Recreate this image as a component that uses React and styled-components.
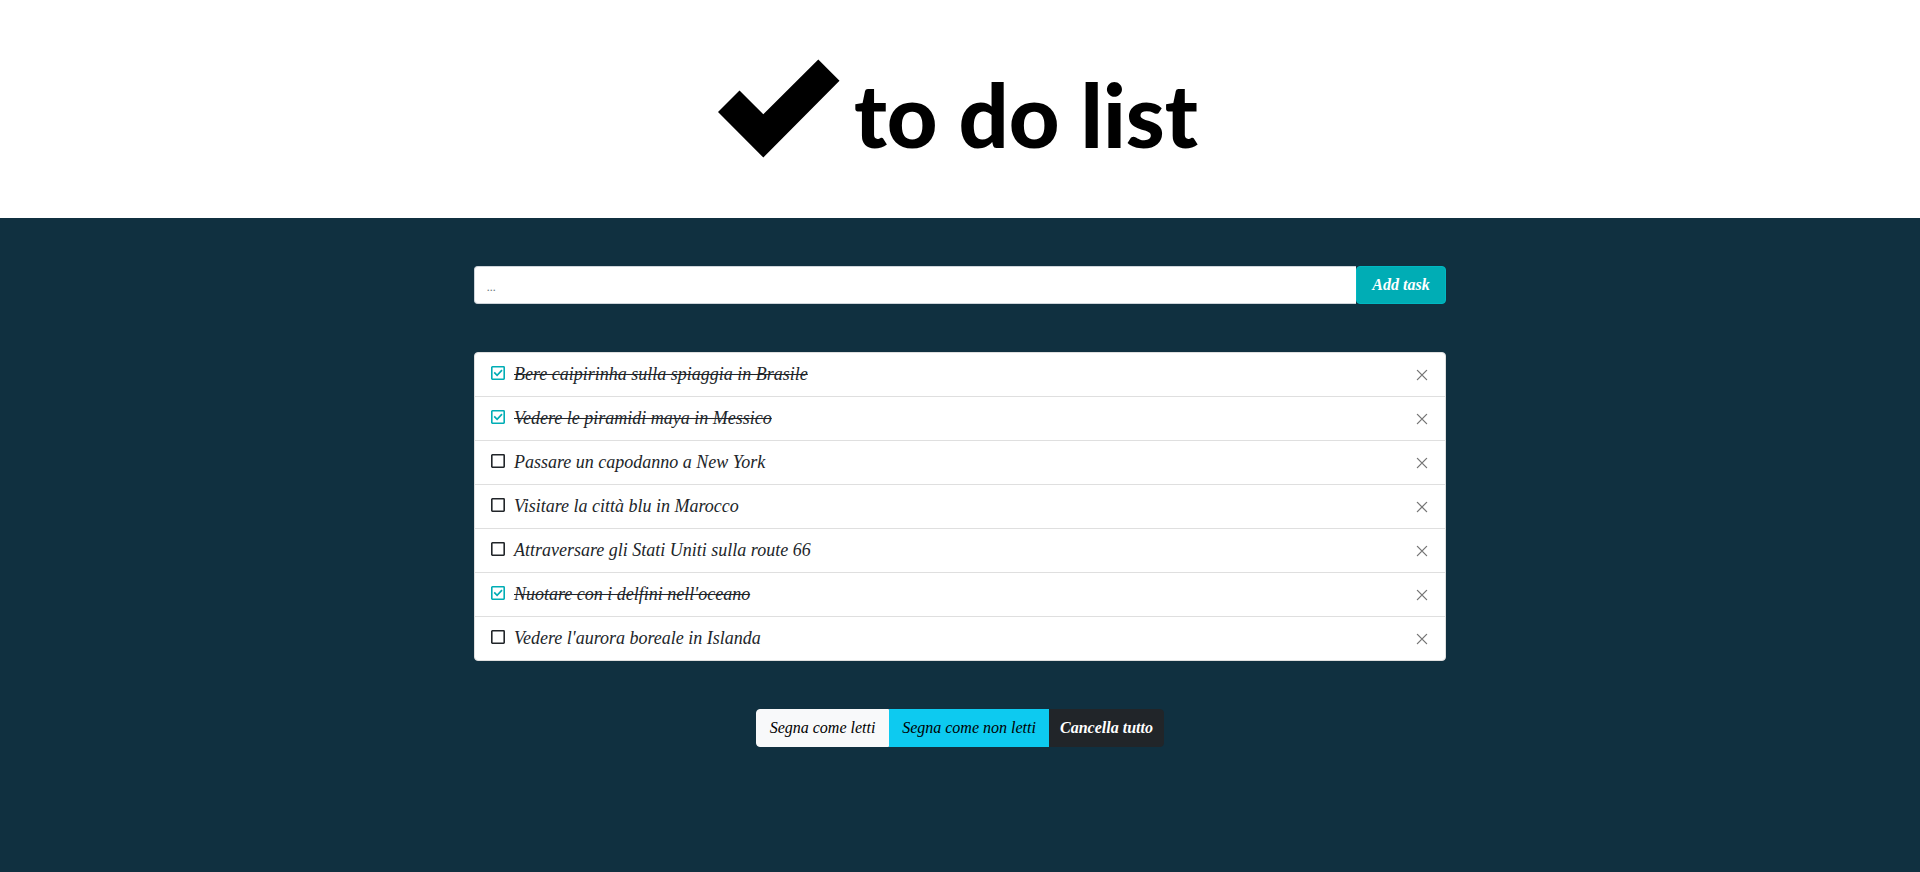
import React, { useState } from 'react';
import styled, { createGlobalStyle } from 'styled-components';

const GlobalStyle = createGlobalStyle`
  *, *::before, *::after { box-sizing: border-box; }
  body {
    margin: 0;
    background: #103040;
    color: #212529;
    font-family: "Liberation Serif", serif;
    font-style: italic;
    font-size: 18px;
    line-height: 24px;
  }
  button, input { font: inherit; }
`;

const Header = styled.header`
  display: flex;
  justify-content: center;
  align-items: flex-start;
  gap: 14px;
  height: 218px;
  padding: 59px 4px 0 0;
  background: #fff;
  color: #000;
`;

const CheckMark = styled.svg`
  width: 122px;
  height: 99px;
  flex: none;
`;

const Title = styled.h1`
  margin: 0;
  font: 900 88px/110px Lato, sans-serif;
  white-space: nowrap;
`;

const Main = styled.main`
  display: flex;
  flex-direction: column;
  gap: 48px;
  max-width: 996px;
  margin: 0 auto;
  padding: 48px 12px;
`;

const TaskForm = styled.form`
  display: flex;
`;

const TaskInput = styled.input`
  flex: 1;
  min-width: 0;
  height: 38px;
  padding: 6px 12px;
  border: 1px solid #ced4da;
  border-right: 0;
  border-radius: 4px 0 0 4px;
  background: #fff;
  color: #212529;
  outline: 0;
  &::placeholder { color: #6c757d; opacity: 1; font-size: 12px; }
`;

const tones = {
  teal: ['#00adb5', '#00b8c2', '#fff'],
  light: ['#f8f9fa', '#f8f9fa', '#000'],
  info: ['#0dcaf0', '#0dcaf0', '#000'],
  dark: ['#212529', '#212529', '#fff'],
};

const Button = styled.button`
  height: 38px;
  min-width: ${(p) => p.$width}px;
  padding: 0 10px;
  border: 1px solid ${(p) => tones[p.$tone][1]};
  background: ${(p) => tones[p.$tone][0]};
  color: ${(p) => tones[p.$tone][2]};
  font-size: 16px;
  font-weight: ${(p) => (p.$bold ? 700 : 400)};
  white-space: nowrap;
  cursor: pointer;
`;

const AddButton = styled(Button)`
  border-radius: 4px;
`;

const List = styled.ul`
  margin: 0;
  padding: 0;
  list-style: none;
  border: 1px solid #dfdfdf;
  border-radius: 4px;
  background: #fff;
  overflow: hidden;
`;

const Row = styled.li`
  display: flex;
  align-items: center;
  justify-content: space-between;
  min-height: 43px;
  padding: 0 13px 2px 16px;
  & + & {
    min-height: 44px;
    border-top: 1px solid #dfdfdf;
  }
`;

const TaskLabel = styled.label`
  display: flex;
  align-items: center;
  gap: 9px;
  cursor: pointer;
`;

const Tick = styled.span`
  display: grid;
  width: 14px;
  height: 14px;
  margin-bottom: 2px;
  & > * {
    grid-area: 1 / 1;
    width: 14px;
    height: 14px;
    margin: 0;
  }
  input { appearance: none; }
  svg {
    pointer-events: none;
    color: ${(p) => (p.$done ? '#00adb5' : '#212529')};
  }
`;

const TaskText = styled.span`
  text-decoration: ${(p) => (p.$done ? 'line-through' : 'none')};
`;

const RemoveButton = styled.button`
  display: grid;
  place-items: center;
  width: 20px;
  height: 24px;
  padding: 2px 0 0;
  border: 0;
  background: none;
  color: #777;
  cursor: pointer;
`;

const Actions = styled.div`
  display: flex;
  justify-content: center;
  ${Button}:first-child { border-radius: 4px 0 0 4px; }
  ${Button}:last-child { border-radius: 0 4px 4px 0; }
`;

const initialTasks = [
  { text: 'Bere caipirinha sulla spiaggia in Brasile', done: true },
  { text: 'Vedere le piramidi maya in Messico', done: true },
  { text: 'Passare un capodanno a New York', done: false },
  { text: 'Visitare la città blu in Marocco', done: false },
  { text: 'Attraversare gli Stati Uniti sulla route 66', done: false },
  { text: "Nuotare con i delfini nell'oceano", done: true },
  { text: "Vedere l'aurora boreale in Islanda", done: false },
];

function Task({ task, onToggle, onRemove }) {
  return (
    <Row>
      <TaskLabel>
        <Tick $done={task.done}>
          <input type="checkbox" checked={task.done} onChange={onToggle} />
          <svg viewBox="0 0 14 14" fill="none" stroke="currentColor" aria-hidden="true">
            <rect x="0.8" y="0.8" width="12.4" height="12.4" rx="0.6" strokeWidth="1.6" />
            {task.done && <path d="M3.2 6.4 6.1 9.3 11 4.2" strokeWidth="1.7" />}
          </svg>
        </Tick>
        <TaskText $done={task.done}>{task.text}</TaskText>
      </TaskLabel>
      <RemoveButton type="button" aria-label="Rimuovi" onClick={onRemove}>
        <svg width="12" height="12" viewBox="0 0 12 12" fill="none" stroke="currentColor" strokeWidth="1.3" strokeLinecap="round" aria-hidden="true">
          <path d="M1.4 1.4 10.6 10.6M10.6 1.4 1.4 10.6" />
        </svg>
      </RemoveButton>
    </Row>
  );
}

export default function App() {
  const [tasks, setTasks] = useState(initialTasks);
  const [draft, setDraft] = useState('');
  const markAll = (done) => setTasks(tasks.map((t) => ({ ...t, done })));
  const addTask = (e) => {
    e.preventDefault();
    if (draft.trim()) {
      setTasks([...tasks, { text: draft.trim(), done: false }]);
      setDraft('');
    }
  };

  return (
    <>
      <GlobalStyle />
      <Header>
        <CheckMark viewBox="0 0 122 99" aria-hidden="true">
          <path d="M0 53 21.5 31.5 45.3 55.3 100.3 0.5 121.5 21.8 45.3 98.5Z" />
        </CheckMark>
        <Title>to do list</Title>
      </Header>
      <Main>
        <TaskForm onSubmit={addTask}>
          <TaskInput
            aria-label="Task"
            placeholder="..."
            value={draft}
            onChange={(e) => setDraft(e.target.value)}
          />
          <AddButton type="submit" $tone="teal" $width={90} $bold>Add task</AddButton>
        </TaskForm>
        <List>
          {tasks.map((task, i) => (
            <Task
              key={task.text}
              task={task}
              onToggle={() => setTasks(tasks.map((t, j) => (j === i ? { ...t, done: !t.done } : t)))}
              onRemove={() => setTasks(tasks.filter((_, j) => j !== i))}
            />
          ))}
        </List>
        <Actions>
          <Button type="button" $tone="light" $width={133} onClick={() => markAll(true)}>Segna come letti</Button>
          <Button type="button" $tone="info" $width={160} onClick={() => markAll(false)}>Segna come non letti</Button>
          <Button type="button" $tone="dark" $width={115} $bold onClick={() => setTasks([])}>Cancella tutto</Button>
        </Actions>
      </Main>
    </>
  );
}
